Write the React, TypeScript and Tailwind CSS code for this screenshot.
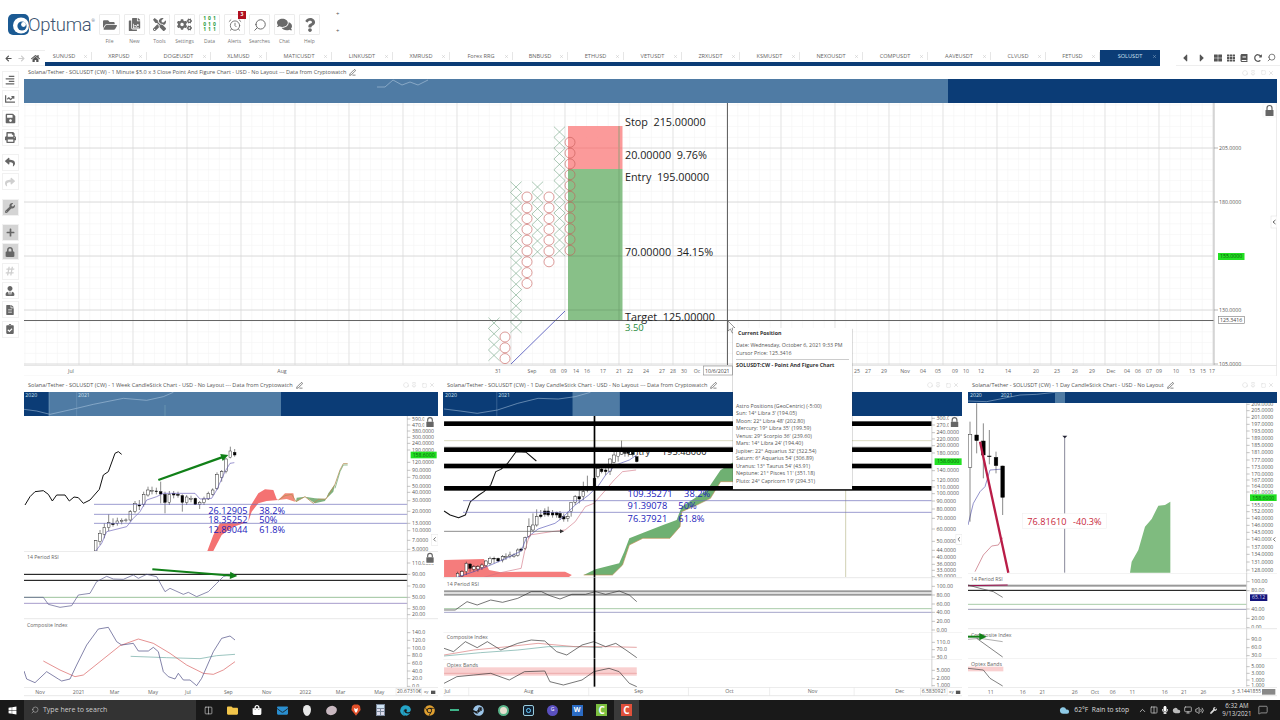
import type { ReactNode } from 'react';
import {
  FaArrowLeft,
  FaArrowRight,
  FaCaretLeft,
  FaCaretRight,
  FaChrome,
  FaClipboardCheck,
  FaCogs,
  FaComments,
  FaEdge,
  FaEnvelope,
  FaFileAlt,
  FaFolder,
  FaFolderOpen,
  FaHashtag,
  FaHome,
  FaLock,
  FaMicrophone,
  FaPlus,
  FaPrint,
  FaQuestion,
  FaRedoAlt,
  FaReply,
  FaSave,
  FaShare,
  FaShoppingBag,
  FaSteam,
  FaThLarge,
  FaTh,
  FaTools,
  FaUserTie,
  FaWindows,
  FaWrench,
  FaBook,
  FaAlignRight,
  FaChartLine,
  FaCopy,
} from 'react-icons/fa';
import {
  AlarmClock,
  ChevronUp,
  Cloud,
  Columns2,
  Hexagon,
  MessageSquare,
  Monitor,
  PenLine,
  Pin,
  Search,
  Square,
  Volume2,
  X,
} from 'lucide-react';

const NAVY = '#0b3c76';
const LIGHT = '#4f7ba4';

// ---- chart helpers. Panes draw in page units of a 3x crop so the numbers stay readable.
type PaneProps = {
  x: number;
  y: number;
  w: number;
  h: number;
  ox?: number;
  oy?: number;
  sx?: number;
  sy?: number;
  children: ReactNode;
};

function Pane({ x, y, w, h, ox = 0, oy = 0, sx = 3, sy = 3, children }: PaneProps) {
  return (
    <svg
      width={w}
      height={h}
      viewBox={`${(x - ox) * sx} ${(y - oy) * sy} ${w * sx} ${h * sy}`}
      preserveAspectRatio="none"
      className="block shrink-0"
    >
      {children}
    </svg>
  );
}

type Candle = [number, number, number, number, number, number?];

function Candles({ data, bw = 8 }: { data: Candle[]; bw?: number }) {
  return (
    <g>
      {data.map(([x, hi, lo, o, c, black], i) => (
        <g key={i}>
          <line x1={x} x2={x} y1={hi} y2={lo} stroke="#222" strokeWidth={1.6} />
          <rect
            x={x - bw / 2}
            y={o}
            width={bw}
            height={Math.max(c - o, 2)}
            fill={black ? '#000' : '#fff'}
            stroke="#111"
            strokeWidth={1.3}
          />
        </g>
      ))}
    </g>
  );
}

function Line({ d, c = '#555', w = 2 }: { d: string; c?: string; w?: number }) {
  return <polyline points={d} fill="none" stroke={c} strokeWidth={w} strokeLinejoin="round" />;
}

function Label({ x, y, text, size = 15.5, color = '#666' }: { x: number; y: number; text: string; size?: number; color?: string }) {
  return (
    <text x={x} y={y + size * 0.35} fontSize={size} fill={color}>
      {text}
    </text>
  );
}

function Axis({ x, top, bottom, ticks }: { x: number; top: number; bottom: number; ticks: [number, string][] }) {
  return (
    <g>
      <line x1={x} x2={x} y1={top} y2={bottom} stroke="#c8c8c8" strokeWidth={2.5} />
      {ticks.map(([y, t]) => (
        <g key={y}>
          <line x1={x} x2={x + 9} y1={y} y2={y} stroke="#888" strokeWidth={1.5} />
          <Label x={x + 14} y={y} text={t} color="#555" />
        </g>
      ))}
    </g>
  );
}

function Badge({ x, y, w, text, bg = '#23e023', color = '#0a5a0a' }: { x: number; y: number; w: number; text: string; bg?: string; color?: string }) {
  return (
    <g>
      <rect x={x} y={y - 10} width={w} height={20} fill={bg} />
      <text x={x + w / 2} y={y + 5.5} fontSize={15.5} fill={color} textAnchor="middle">
        {text}
      </text>
    </g>
  );
}

function Arrow({ x1, y1, x2, y2, w = 6 }: { x1: number; y1: number; x2: number; y2: number; w?: number }) {
  const a = Math.atan2(y2 - y1, x2 - x1);
  const hx = (t: number, s: number) => x2 - t * Math.cos(a) - s * Math.sin(a);
  const hy = (t: number, s: number) => y2 - t * Math.sin(a) + s * Math.cos(a);
  return (
    <g>
      <line x1={x1} y1={y1} x2={hx(12, 0)} y2={hy(12, 0)} stroke="#118018" strokeWidth={w} />
      <polygon
        points={`${x2},${y2} ${hx(22, 11)},${hy(22, 11)} ${hx(22, -11)},${hy(22, -11)}`}
        fill="#118018"
      />
    </g>
  );
}

function LockBadge({ x, y }: { x: number; y: number }) {
  return (
    <g>
      <rect x={x - 17} y={y - 19} width={34} height={36} fill="#fff" />
      <rect x={x - 11} y={y - 3} width={22} height={16} fill="#666" rx={1} />
      <path d={`M${x - 7} ${y - 3} v-5 a7 7 0 0 1 14 0 v5`} fill="none" stroke="#666" strokeWidth={3.5} />
    </g>
  );
}

function XLabels({ items, y = 950 }: { items: [number, string][]; y?: number }) {
  return (
    <g>
      {items.map(([x, t]) => (
        <text key={x} x={x} y={y + 5.5} fontSize={15.5} fill="#666" textAnchor="middle">
          {t}
        </text>
      ))}
    </g>
  );
}

function Divider({ x1, x2, y }: { x1: number; x2: number; y: number }) {
  return <line x1={x1} x2={x2} y1={y} y2={y} stroke="#ddd" strokeWidth={2} />;
}

function Nav({ x, y, w, h, from, to, ox, oy = 375, sx = 3, sy = 3, children }: { x: number; y: number; w: number; h: number; from: number; to: number; ox: number; oy?: number; sx?: number; sy?: number; children?: ReactNode }) {
  return (
    <Pane x={x} y={y} w={w} h={h} ox={ox} oy={oy} sx={sx} sy={sy}>
      <rect x={-100} y={0} width={2000} height={200} fill={NAVY} />
      <rect x={from} y={0} width={to - from} height={200} fill={LIGHT} />
      {children}
    </Pane>
  );
}

// ---- top point & figure chart
const range = (from: number, to: number, step: number) => {
  const out: number[] = [];
  for (let v = from; v <= to; v += step) out.push(v);
  return out;
};

function XColumn({ x, from, to }: { x: number; from: number; to: number }) {
  return (
    <g>
      {range(from, to, 10.8).map(y => (
        <path
          key={y}
          d={`M${x - 5.6} ${y - 5.4} L${x + 5.6} ${y + 5.4} M${x + 5.6} ${y - 5.4} L${x - 5.6} ${y + 5.4}`}
          stroke="#74a585"
          strokeWidth={0.6}
        />
      ))}
    </g>
  );
}

function OColumn({ x, from, to }: { x: number; from: number; to: number }) {
  return (
    <g>
      {range(from, to, 10.8).map(y => (
        <circle key={y} cx={x} cy={y} r={5} fill="none" stroke="#c65a58" strokeWidth={0.6} />
      ))}
    </g>
  );
}

const topDates: [number, string][] = [
  [71, 'Jul'], [282, 'Aug'], [498, '31'], [532, 'Sep'], [553, '08'], [564, '09'], [576, '14'], [587, '16'],
  [603, '17'], [619, '21'], [630, '22'], [646, '24'], [662, '27'], [673, '28'], [684, '30'], [697, 'Oc'],
  [857, '25'], [868, '27'], [884, '29'], [905, 'Nov'], [923, '04'], [938, '05'], [955, '09'], [966, '10'],
  [981, '12'], [1008, '14'], [1036, '20'], [1057, '23'], [1075, '26'], [1092, '29'], [1111, 'Dec'],
  [1127, '04'], [1138, '06'], [1149, '07'], [1159, '09'], [1176, '10'], [1192, '13'], [1203, '15'], [1212, '17'],
];

function TopChart() {
  return (
    <Pane x={24} y={103} w={1253} h={273} sx={1} sy={1}>
      {range(25, 1214, 10.8).map(x => (
        <line key={x} x1={x} x2={x} y1={103} y2={365} stroke="#f3f3f3" strokeWidth={0.6} />
      ))}
      {range(105, 365, 10.8).map(y => (
        <line key={y} x1={24} x2={1214} y1={y} y2={y} stroke="#f3f3f3" strokeWidth={0.6} />
      ))}
      {range(79, 1214, 54).map(x => (
        <line key={x} x1={x} x2={x} y1={103} y2={365} stroke="#dcdcdc" strokeWidth={0.7} />
      ))}
      {[148, 202, 256, 310, 364].map(y => (
        <line key={y} x1={24} x2={1214} y1={y} y2={y} stroke="#d4d4d4" strokeWidth={0.8} />
      ))}

      <rect x={568} y={126} width={54.5} height={43} fill="#fb8f8f" fillOpacity={0.9} />
      <rect x={568} y={169} width={54.5} height={151} fill="#82bd82" fillOpacity={0.95} />
      <line x1={619} x2={619} y1={126} y2={320} stroke="#6fa06f" strokeWidth={0.7} />
      <line x1={568} x2={622} y1={148} y2={148} stroke="#e88" strokeWidth={0.6} />
      {[202, 256, 310].map(y => (
        <line key={y} x1={568} x2={622} y1={y} y2={y} stroke="#6fa06f" strokeWidth={0.6} />
      ))}

      <line x1={511} y1={364} x2={565} y2={311} stroke="#5a5fc0" strokeWidth={0.9} />
      <XColumn x={559.5} from={132} to={254} />
      <OColumn x={570} from={142.3} to={251} />
      <XColumn x={537.5} from={187} to={255} />
      <OColumn x={549} from={197} to={262} />
      <XColumn x={516} from={187} to={335} />
      <OColumn x={527} from={197} to={294} />
      <XColumn x={494} from={323} to={363} />
      <OColumn x={505} from={337} to={359} />

      <line x1={24} x2={1214} y1={320.5} y2={320.5} stroke="#555" strokeWidth={0.9} />
      <line x1={727.5} x2={727.5} y1={103} y2={365} stroke="#555" strokeWidth={0.9} />

      <g fontSize={10.8} fill="#222">
        <text x={625} y={126}>Stop&#160;&#160;215.00000</text>
        <text x={625} y={159}>20.00000&#160;&#160;9.76%</text>
        <text x={625} y={181}>Entry&#160;&#160;195.00000</text>
        <text x={625} y={256}>70.00000&#160;&#160;34.15%</text>
        <text x={625} y={321}>Target&#160;&#160;125.00000</text>
      </g>
      <text x={625} y={331} fontSize={9.5} fill="#1f8a3c">3.50</text>

      <path d="M728 321 l0 10 l2.4 -2 l2 4 l1.6 -.8 l-2 -4 l3 -.2 z" fill="#fff" stroke="#555" strokeWidth={0.6} />

      <line x1={1214} x2={1214} y1={103} y2={365} stroke="#c4c4c4" strokeWidth={1.2} />
      <line x1={24} x2={1277} y1={365.5} y2={365.5} stroke="#ddd" strokeWidth={0.7} />
      <line x1={1276.5} x2={1276.5} y1={103} y2={376} stroke="#e4e4e4" strokeWidth={0.7} />
      <line x1={24} x2={1277} y1={376} y2={376} stroke="#eee" strokeWidth={0.7} />
      {([[148, '205.0000'], [202, '180.0000'], [310, '130.0000'], [364, '105.0000']] as [number, string][]).map(([y, t]) => (
        <g key={y}>
          <line x1={1214} x2={1218} y1={y} y2={y} stroke="#888" strokeWidth={0.6} />
          <text x={1219} y={y + 1.8} fontSize={5.2} fill="#555">{t}</text>
        </g>
      ))}
      <rect x={1218} y={253} width={26.5} height={7} fill="#23e023" />
      <text x={1220} y={258.4} fontSize={5.2} fill="#0a5a0a">155.0000</text>
      <rect x={1218.5} y={316.5} width={26} height={7} fill="#fff" stroke="#777" strokeWidth={0.6} />
      <text x={1220} y={322} fontSize={5.2} fill="#444">125.3416</text>

      <g fontSize={5.2} fill="#666" textAnchor="middle">
        {topDates.map(([x, t]) => (
          <text key={x} x={x} y={372.5}>{t}</text>
        ))}
      </g>
      <rect x={703.5} y={366} width={29} height={9} fill="#fff" stroke="#777" strokeWidth={0.5} />
      <text x={705} y={372.5} fontSize={5.2} fill="#444">10/6/2021</text>

      <rect x={1263} y={104} width={13} height={13} fill="#fff" stroke="#eee" strokeWidth={0.5} />
      <rect x={1265.5} y={110} width={8} height={6} rx={0.5} fill="#666" />
      <path d="M1267 110 v-2 a2.5 2.5 0 0 1 5 0 v2" fill="none" stroke="#666" strokeWidth={1.2} />
      <rect x={1271} y={216} width={6} height={12} fill="#fff" stroke="#ddd" strokeWidth={0.5} />
      <path d="M1275.5 220 l-2.5 2 l2.5 2" fill="none" stroke="#555" strokeWidth={0.9} />
    </Pane>
  );
}

// ---- bottom-left weekly chart
const weekCandles: Candle[] = [
  [287, 495, 528, 497, 528], [300, 465, 510, 475, 500], [313, 445, 490, 457, 478], [326, 418, 468, 443, 458],
  [339, 430, 455, 445, 449, 1], [352, 428, 452, 438, 445], [365, 430, 448, 436, 440], [378, 430, 442, 435, 437],
  [391, 405, 440, 410, 435], [405, 378, 415, 385, 410], [418, 375, 405, 390, 393, 1], [431, 350, 395, 358, 388],
  [444, 335, 365, 345, 360], [456, 335, 358, 347, 350], [469, 338, 358, 348, 350, 1], [482, 320, 385, 350, 357, 1],
  [495, 350, 415, 358, 382, 1], [508, 348, 390, 358, 382], [521, 348, 370, 356, 360, 1], [534, 350, 368, 358, 361, 1],
  [547, 358, 410, 362, 382, 1], [560, 360, 390, 366, 383], [573, 362, 382, 370, 373], [586, 368, 390, 370, 388, 1],
  [599, 378, 402, 382, 388], [612, 365, 390, 372, 383], [625, 350, 375, 355, 372], [638, 340, 362, 345, 358],
  [651, 292, 345, 298, 340], [665, 285, 320, 290, 308], [678, 250, 295, 252, 290], [691, 215, 250, 228, 248],
  [704, 222, 245, 232, 240, 1],
];

function LeftPanel() {
  const o = { ox: 0, oy: 375 };
  const x = 24;
  const w = 414;
  return (
    <section className="flex w-[414px] flex-col">
      <TitleBar text="Solana/Tether - SOLUSDT (CW) - 1 Week CandleStick Chart - USD - No Layout --- Data from Cryptowatch" />
      <Nav x={x} y={392} w={w} h={24} from={49 * 3} to={281 * 3} ox={0}>
        <Label x={76} y={60} text="2020" color="#cfe0f0" />
        <Label x={234} y={60} text="2021" color="#cfe0f0" />
        <Line d="72,103 110,108 150,118 230,100 280,88 370,70 440,76 490,65 520,52" c="#b9d0e6" w={1.5} />
        <line x1={147} x2={147} y1={50} y2={123} stroke="#8fb0cc" strokeWidth={1.5} />
        <line x1={230} x2={230} y1={50} y2={123} stroke="#8fb0cc" strokeWidth={1} />
        <line x1={495} x2={495} y1={90} y2={123} stroke="#9cc" strokeWidth={1} />
      </Nav>
      <Pane x={x} y={416} w={w} h={135} {...o}>
        <Line d="75,390 90,365 105,350 130,347 145,358 157,378 170,360 195,360 208,378 222,366 235,368 250,385 270,375 298,343 310,300 325,290 345,235 355,230 365,238" c="#111" w={3} />
        <polygon points="622,528 640,480 660,445 745,440 750,395 775,355 795,343 820,345 830,372 835,375 800,378 775,385 755,410 745,440 700,455 665,480 640,528" fill="#f47272" />
        <polygon points="835,375 855,355 880,355 885,380 860,372" fill="#f38a7a" />
        <polygon points="888,380 915,365 945,385 975,378 985,355 1005,328 1000,350 985,365 975,372 945,370 915,365 890,368" fill="#7fb27f" />
        <Line d="835,375 855,362 875,358 888,380 915,365 940,385 955,373 978,372 1005,328 1020,285 1030,266 1043,266" c="#b88f58" w={2.5} />
        <Line d="1005,340 1020,290 1030,270 1043,270" c="#7fb27f" w={2.5} />
        <Candles data={weekCandles} />
        <Line d="287,528 305,505 320,470 380,455 400,430 420,410 440,375 470,365 490,355 585,355 600,372 635,370 650,345 675,290 690,265 703,263" c="#5a50b0" w={1.8} />
        {[388, 418, 445].map(y => (
          <line key={y} x1={282} x2={1222} y1={y} y2={y} stroke="#6a6ab8" strokeWidth={2} />
        ))}
        <g fontSize={27.5} fill="#2222bb">
          <text x={625} y={416}>26.12905</text>
          <text x={778} y={416}>38.2%</text>
          <text x={625} y={445}>18.35252</text>
          <text x={778} y={445}>50%</text>
          <text x={625} y={473}>12.89044</text>
          <text x={778} y={473}>61.8%</text>
        </g>
        <Arrow x1={475} y1={315} x2={685} y2={240} w={7} />
        <Axis
          x={1222}
          top={123}
          bottom={528}
          ticks={[[132, '590.0000'], [150, '470.0000'], [168, '380.0000'], [187, '300.0000'], [205, '240.0000'], [225, '190.0000'], [262, '120.0000'], [286, '90.0000'], [307, '70.0000'], [334, '50.0000'], [352, '40.0000'], [377, '30.0000'], [409, '20.0000'], [445, '13.0000'], [467, '10.0000'], [496, '7.0000'], [523, '5.0000']]}
        />
        <LockBadge x={1290} y={143} />
        <Badge x={1232} y={240} w={78} text="158.6000" />
        <rect x={1294} y={478} width={20} height={34} fill="#fff" stroke="#e4e4e4" strokeWidth={1.5} />
        <path d="M1307 487 l-6 6 l6 6" fill="none" stroke="#555" strokeWidth={2.5} />
      </Pane>
      <Pane x={x} y={551} w={w} h={67} {...o}>
        <Divider x1={72} x2={1314} y={529} />
        <Label x={81} y={548} text="14 Period RSI" />
        <line x1={72} x2={1222} y1={598} y2={598} stroke="#000" strokeWidth={3} />
        <line x1={72} x2={1222} y1={616} y2={616} stroke="#000" strokeWidth={3} />
        <line x1={72} x2={1222} y1={667} y2={667} stroke="#6aa56a" strokeWidth={2} />
        <line x1={72} x2={1222} y1={685} y2={685} stroke="#7a6ab0" strokeWidth={2} />
        <Line d="72,667 130,667 145,688 180,697 215,692 235,660 270,655 290,620 320,604 340,612 370,613 400,600 415,610 440,598 470,605 495,650 510,640 550,658 565,652 590,665 625,650 650,625 670,605 700,595" c="#55558a" />
        <Arrow x1={457} y1={583} x2={712} y2={603} />
        <Axis x={1222} top={528} bottom={730} ticks={[[564, '110.0000'], [598, '90.00'], [633, '70.00'], [667, '50.00'], [701, '30.00'], [719, '20.00']]} />
        <LockBadge x={1290} y={550} />
      </Pane>
      <Pane x={x} y={618} w={w} h={69} {...o}>
        <Divider x1={72} x2={1314} y={731} />
        <Label x={81} y={750} text="Composite Index" />
        <Line d="392,844 500,848 600,851 650,842 705,838" c="#6aa8a0" />
        <Line d="130,858 180,885 225,905 250,900 300,860 360,812 415,792 460,805 510,835 560,870 610,895 640,898 670,885 705,860" c="#d85a5a" />
        <Line d="72,888 80,912 105,923 140,890 175,912 185,918 210,912 230,870 260,810 295,762 325,757 350,800 365,810 400,805 415,828 445,828 460,817 475,830 490,890 505,905 525,912 535,895 550,915 570,915 590,932 605,910 640,830 665,790 690,783 705,795" c="#45457e" />
        <Axis x={1222} top={730} bottom={936} ticks={[[773, '140.0'], [796, '120.0'], [819, '100.0'], [842, '80.0'], [865, '60.0'], [888, '40.0'], [911, '20.0'], [934, '0.0']]} />
      </Pane>
      <Pane x={x} y={687} w={w} h={10} {...o}>
        <Divider x1={72} x2={1314} y={937} />
        <XLabels items={[[120, 'Nov'], [236, '2021'], [344, 'Mar'], [459, 'May'], [564, 'Jul'], [685, 'Sep'], [800, 'Nov'], [916, '2022'], [1022, 'Mar'], [1138, 'May']]} />
        <rect x={1188} y={940} width={76} height={20} fill="#fff" stroke="#ddd" strokeWidth={1.5} />
        <text x={1191} y={955} fontSize={15} fill="#555">20.67310€</text>
        <text x={1272} y={955} fontSize={13} fill="#555">xy</text>
        <rect x={1293} y={947} width={13} height={10} fill="#555" />
        <Divider x1={72} x2={1314} y={962} />
      </Pane>
    </section>
  );
}

// ---- bottom-middle daily chart
const dayCandles: Candle[] = [
  [52, 590, 607, 595, 607], [65, 585, 607, 590, 603], [78, 560, 600, 565, 590], [89, 565, 590, 567, 580, 1],
  [100, 570, 590, 575, 583], [112, 570, 590, 575, 582], [124, 565, 585, 570, 578], [136, 555, 575, 558, 572],
  [148, 545, 570, 550, 565], [160, 545, 565, 550, 552, 1], [172, 548, 562, 550, 558, 1], [185, 540, 562, 545, 555],
  [195, 535, 555, 545, 548], [207, 530, 550, 540, 545], [219, 535, 548, 540, 545], [230, 520, 545, 525, 542],
  [240, 518, 530, 522, 526, 1], [252, 485, 525, 488, 520], [263, 430, 490, 455, 485], [275, 415, 470, 450, 465],
  [286, 403, 455, 425, 450], [298, 405, 430, 420, 425, 1], [310, 400, 425, 408, 418, 1], [320, 395, 425, 408, 420, 1],
  [333, 405, 428, 413, 420, 1], [345, 410, 428, 413, 420, 1], [355, 408, 435, 415, 428, 1], [366, 415, 440, 425, 432, 1],
  [378, 410, 440, 425, 430], [388, 385, 425, 382, 410], [400, 360, 390, 365, 382], [412, 345, 385, 365, 372, 1],
  [424, 320, 375, 350, 365], [436, 302, 352, 335, 345], [457, 305, 345, 310, 335, 1], [467, 270, 310, 280, 305],
  [478, 275, 295, 282, 290, 1], [490, 280, 300, 285, 290, 1], [503, 250, 300, 252, 290], [515, 230, 265, 240, 262],
  [527, 220, 260, 230, 245], [537, 197, 240, 230, 238], [547, 225, 245, 232, 235, 1], [557, 228, 245, 230, 235, 1],
  [570, 225, 245, 232, 238, 1], [582, 245, 262, 245, 260, 1],
];

function MidPanel() {
  const o = { ox: 440, oy: 375, sx: 2.958 };
  const x = 443;
  const w = 519;
  const cursor = (a: number, b: number) => <line x1={457} x2={457} y1={a} y2={b} stroke="#000" strokeWidth={5} />;
  return (
    <section className="flex w-[519px] flex-col">
      <TitleBar text="Solana/Tether - SOLUSDT (CW) - 1 Day CandleStick Chart - USD - No Layout --- Data from Cryptowatch" />
      <Nav x={x} y={392} w={w} h={24} from={392} to={532} ox={440} sx={2.958}>
        <Label x={15} y={60} text="2020" color="#cfe0f0" />
        <Label x={172} y={60} text="2021" color="#cfe0f0" />
        <Line d="12,102 60,108 110,115 170,105 230,85 290,70 350,72 400,65 445,52" c="#b9d0e6" w={1.5} />
        <line x1={168} x2={168} y1={50} y2={123} stroke="#8fb0cc" strokeWidth={1} />
      </Nav>
      <Pane x={x} y={416} w={w} h={161} {...o}>
        <line x1={12} x2={1455} y1={197} y2={197} stroke="#c9c9a5" strokeWidth={2} />
        <line x1={12} x2={1455} y1={215} y2={215} stroke="#ccc" strokeWidth={2} />
        <line x1={1200} x2={1200} y1={340} y2={607} stroke="#b7b78c" strokeWidth={2} />
        <polygon points="12,555 130,552 145,585 180,592 240,590 370,590 390,600 380,607 12,607" fill="#f57c7c" />
        <polygon points="425,600 460,583 530,565 545,530 560,490 605,472 660,450 700,435 715,395 790,345 830,285 870,260 870,320 830,320 800,370 760,390 715,410 710,455 680,490 600,490 560,510 540,570 510,600 430,600" fill="#6fb072" />
        <Line d="425,600 510,600 540,570 560,510 600,490 680,490 710,455 715,410 760,390 800,370 830,320 870,320" c="#c48b4f" w={1.8} />
        <Line d="12,408 30,420 55,428 75,420 90,380 115,360 130,350 150,330 165,290 180,283 200,265 225,230 255,232 285,258" c="#111" w={3} />
        <Candles data={dayCandles} />
        <Line d="50,607 100,590 150,570 200,548 240,528 255,490 290,462 340,445 360,430 400,390 440,360 470,330 490,300 520,270 560,255 582,240" c="#4a4ab0" w={1.8} />
        <Line d="130,607 170,595 240,580 250,530 265,480 330,470 370,465 400,440 430,395 455,385 490,345 515,315 540,290 580,285" c="#d07080" w={1.8} />
        <line x1={12} x2={360} y1={469} y2={469} stroke="#555" strokeWidth={2} />
        <polygon points="355,463 367,469 355,475" fill="#333" />
        <text x={555} y={240} fontSize={27.5} fill="#222">Entry</text>
        <text x={656} y={240} fontSize={27.5} fill="#222">195.48000</text>
        {[146, 224, 273, 340].map(y => (
          <rect key={y} x={12} y={y - 7} width={1443} height={14} fill="#000" />
        ))}
        {[377, 412].map(y => (
          <line key={y} x1={68} x2={1455} y1={y} y2={y} stroke="#6a6ab8" strokeWidth={2} />
        ))}
        <g fontSize={27.5} fill="#2222bb">
          <text x={555} y={365}>109.35271</text>
          <text x={722} y={365}>38.2%</text>
          <text x={555} y={403}>91.39078</text>
          <text x={705} y={403}>50%</text>
          <text x={555} y={440}>76.37921</text>
          <text x={705} y={440}>61.8%</text>
        </g>
        {cursor(123, 607)}
        <Axis
          x={1455}
          top={123}
          bottom={607}
          ticks={[[130, '300.0000'], [150, '270.0000'], [173, '240.0000'], [192, '220.0000'], [212, '200.0000'], [234, '180.0000'], [287, '140.0000'], [317, '120.0000'], [336, '110.0000'], [356, '100.0000'], [378, '90.0000'], [402, '80.0000'], [430, '70.0000'], [462, '60.0000'], [499, '50.0000'], [526, '44.0000'], [546, '40.0000'], [568, '36.0000'], [586, '33.0000'], [605, '30.0000']]}
        />
        <LockBadge x={1522} y={143} />
        <Badge x={1463} y={260} w={80} text="158.6000" />
        <rect x={1526} y={478} width={18} height={30} fill="#fff" stroke="#e4e4e4" strokeWidth={1.5} />
        <path d="M1538 487 l-6 6 l6 6" fill="none" stroke="#555" strokeWidth={2.5} />
      </Pane>
      <Pane x={x} y={577} w={w} h={55} {...o}>
        <Divider x1={10} x2={1545} y={608} />
        <Label x={20} y={627} text="14 Period RSI" />
        <rect x={12} y={646} width={1443} height={6} fill="#999" />
        <rect x={12} y={656} width={1443} height={6} fill="#999" />
        <line x1={12} x2={1455} y1={701} y2={701} stroke="#7fb27f" strokeWidth={2} />
        <line x1={12} x2={1455} y1={712} y2={712} stroke="#7a7ab0" strokeWidth={2} />
        <Line d="12,705 45,705 80,680 110,690 150,675 185,682 230,670 270,650 300,650 325,662 355,672 390,658 430,658 460,650 490,658 530,648 560,660 582,680" c="#333" />
        {cursor(607, 770)}
        <Axis x={1455} top={607} bottom={770} ticks={[[634, '100.00'], [660, '80.00'], [687, '60.00'], [712, '40.00'], [739, '20.00'], [765, '0.00']]} />
      </Pane>
      <Pane x={x} y={632} w={w} h={27} {...o}>
        <Divider x1={10} x2={1545} y={771} />
        <Label x={20} y={788} text="Composite Index" />
        <Line d="12,843 120,833 230,825 320,815 420,815 480,818" c="#6aa8a0" />
        <Line d="12,840 100,825 200,815 290,805 400,815 500,815 582,817" c="#d87a7a" />
        <Line d="12,820 40,830 75,800 110,818 140,800 180,825 230,805 270,795 310,798 345,830 375,840 420,810 455,800 490,815 520,805 550,825 582,848" c="#333" />
        {cursor(770, 851)}
        <Axis x={1455} top={770} bottom={851} ticks={[[802, '110.0'], [824, '70.0'], [846, '30.0']]} />
      </Pane>
      <Pane x={x} y={659} w={w} h={28} {...o}>
        <Divider x1={10} x2={1545} y={852} />
        <rect x={12} y={877} width={570} height={25} fill="#f9d0d0" />
        <line x1={12} x2={582} y1={895} y2={895} stroke="#e79a9a" strokeWidth={2} />
        <Label x={20} y={872} text="Optex Bands" />
        <Line d="12,925 50,905 100,900 150,895 205,915 250,890 310,888 325,920 365,930 420,915 455,890 500,880 530,890 560,925 582,935" c="#333" />
        {cursor(851, 935)}
        <Axis x={1455} top={851} bottom={935} ticks={[[886, '5.000'], [911, '2.000'], [932, '1.000']]} />
      </Pane>
      <Pane x={x} y={687} w={w} h={10} {...o}>
        <Divider x1={10} x2={1545} y={937} />
        <XLabels items={[[22, 'Jul'], [262, 'Aug'], [588, 'Sep'], [856, 'Oct'], [1102, 'Nov'], [1360, 'Dec']]} />
        {[85, 440, 735, 975, 1225].map(v => (
          <line key={v} x1={v} x2={v} y1={937} y2={962} stroke="#e5e5e5" strokeWidth={2} />
        ))}
        <rect x={1422} y={940} width={78} height={20} fill="#fff" stroke="#ddd" strokeWidth={1.5} />
        <text x={1425} y={955} fontSize={15} fill="#555">6.5830921</text>
        <text x={1506} y={955} fontSize={13} fill="#555">xy</text>
        <rect x={1526} y={947} width={13} height={10} fill="#555" />
        <Divider x1={10} x2={1545} y={962} />
      </Pane>
    </section>
  );
}

// ---- bottom-right daily chart
function RightPanel() {
  const o = { ox: 960, oy: 375 };
  const x = 968;
  const w = 309;
  return (
    <section className="ml-[1px] flex w-[309px] flex-col">
      <TitleBar text="Solana/Tether - SOLUSDT (CW) - 1 Day CandleStick Chart - USD - No Layout" />
      <Nav x={x} y={392} w={w} h={11} from={285} to={315} ox={960}>
        <Label x={30} y={60} text="2020" color="#cfe0f0" />
        <Label x={122} y={60} text="2021" color="#cfe0f0" />
        <Line d="24,78 80,80 120,72 180,60 230,58 285,52" c="#b9d0e6" w={1.5} />
      </Nav>
      <Pane x={x} y={403} w={w} h={170} {...o}>
        <polygon points="510,593 515,560 535,525 555,455 575,432 595,392 615,390 631,380 631,593" fill="#7fbb7f" />
        <line x1={314} x2={314} y1={185} y2={593} stroke="#707085" strokeWidth={2.5} />
        <path d="M307 182 h15 l-7.5 8 z" fill="#223" />
        <Line d="24,450 40,385 60,350 75,335 90,285 130,282" c="#5a5ab0" />
        <Line d="45,590 70,540 95,513 115,510 128,488" c="#c06070" />
        <Candles
          bw={11}
          data={[
            [30, 140, 440, 178, 277],
            [50, 85, 235, 180, 197, 1],
            [70, 145, 310, 198, 240, 1],
            [88, 165, 268, 243, 245, 1],
            [108, 230, 295, 247, 272, 1],
            [128, 272, 420, 273, 367, 1],
          ]}
        />
        <line x1={60} y1={200} x2={145} y2={593} stroke="#b91c47" strokeWidth={7} />
        <rect x={188} y={416} width={252} height={45} fill="#fff" stroke="#eee" strokeWidth={1.5} />
        <text x={202} y={449} fontSize={27.5} fill="#c8283c">76.81610</text>
        <text x={339} y={449} fontSize={27.5} fill="#c8283c">-40.3%</text>
        <Axis
          x={860}
          top={85}
          bottom={593}
          ticks={[[88, '209.0000'], [107, '205.0000'], [127, '201.0000'], [148, '197.0000'], [168, '193.0000'], [190, '189.0000'], [211, '185.0000'], [233, '181.0000'], [255, '177.0000'], [278, '173.0000'], [297, '170.0000'], [315, '167.0000'], [333, '164.0000'], [351, '161.0000'], [391, '155.0000'], [410, '152.0000'], [430, '149.0000'], [451, '146.0000'], [472, '143.0000'], [493, '140.0000'], [516, '137.0000'], [538, '134.0000'], [561, '131.0000'], [585, '128.0000']]}
        />
        <Badge x={870} y={368} w={80} text="158.6000" />
        <rect x={935} y={478} width={16} height={30} fill="#fff" />
        <path d="M946 487 l-6 6 l6 6" fill="none" stroke="#555" strokeWidth={2.5} />
      </Pane>
      <Pane x={x} y={573} w={w} h={55} {...o}>
        <Divider x1={24} x2={951} y={594} />
        <Label x={33} y={612} text="14 Period RSI" />
        <rect x={24} y={629} width={836} height={6} fill="#999" />
        <Line d="24,632 143,630" c="#a01050" w={3} />
        <line x1={24} x2={860} y1={646} y2={646} stroke="#000" strokeWidth={3} />
        <line x1={24} x2={860} y1={688} y2={688} stroke="#7fb27f" strokeWidth={2} />
        <line x1={24} x2={860} y1={703} y2={703} stroke="#6a6a90" strokeWidth={2} />
        <Line d="24,630 60,640 100,650 128,667" c="#444" />
        <Axis x={860} top={593} bottom={760} ticks={[[620, '100.00'], [647, '80.00'], [702, '40.00'], [730, '20.00'], [758, '0.00']]} />
        <rect x={870} y={658} width={52} height={20} fill="#14147c" />
        <text x={896} y={673} fontSize={15.5} fill="#dde" textAnchor="middle">65.12</text>
      </Pane>
      <Pane x={x} y={628} w={w} h={30} {...o}>
        <Divider x1={24} x2={951} y={761} />
        <Label x={33} y={781} text="Composite Index" />
        <Line d="24,793 60,790 128,800" c="#888" />
        <Line d="50,790 128,846" c="#444" />
        <Arrow x1={24} y1={785} x2={80} y2={785} />
        <Axis x={860} top={760} bottom={848} ticks={[[793, '90.0'], [818, '60.0'], [842, '30.0']]} />
      </Pane>
      <Pane x={x} y={658} w={w} h={29} {...o}>
        <Divider x1={24} x2={951} y={849} />
        <rect x={24} y={875} width={106} height={14} fill="#f9d0d0" />
        <Label x={33} y={869} text="Optex Bands" />
        <Line d="24,880 70,885 90,910 128,933" c="#444" />
        <Axis x={860} top={848} bottom={935} ticks={[[875, '5.000'], [895, '3.000'], [915, '1.000'], [932, '1.000']]} />
      </Pane>
      <Pane x={x} y={687} w={w} h={10} {...o}>
        <Divider x1={24} x2={951} y={937} />
        <XLabels items={[[92, '11'], [188, '16'], [247, '21'], [344, '26'], [405, 'Oct'], [458, '06'], [517, '11'], [614, '16'], [672, '21'], [730, '26'], [820, '3']]} />
        <text x={831} y={955} fontSize={15} fill="#555">3.1441855</text>
        <rect x={906} y={942} width={40} height={17} fill="#888" />
        <Divider x1={24} x2={951} y={962} />
      </Pane>
    </section>
  );
}

// ---- chrome
function TitleBar({ text, tall }: { text: string; tall?: boolean }) {
  return (
    <div className={`flex items-center justify-between pl-[4px] pr-[3px] text-[5.55px] text-[#555] ${tall ? 'h-[13px]' : 'h-[14px]'}`}>
      <div className="flex items-center gap-[3px] whitespace-nowrap">
        <span>{text}</span>
        <PenLine size={7} strokeWidth={2} className="text-[#333]" />
      </div>
      <div className="flex items-center gap-[2px] text-[#c9c9c9]">
        <Hexagon size={6} strokeWidth={1.5} />
        <Pin size={6} strokeWidth={1.5} className="mr-[3px]" />
        <Square size={5} strokeWidth={1.5} />
        <X size={6} strokeWidth={2} />
      </div>
    </div>
  );
}

const tools = [
  { label: 'File', icon: <FaFolderOpen size={14} /> },
  { label: 'New', icon: <span className="relative"><FaCopy size={13} /><FaChartLine size={6} className="absolute left-[5px] top-[5px] text-white" /></span> },
  { label: 'Tools', icon: <FaTools size={13} /> },
  { label: 'Settings', icon: <FaCogs size={15} /> },
  {
    label: 'Data',
    icon: (
      <span className="grid grid-cols-3 gap-x-[2px] text-[5px] font-bold leading-[5.5px] text-[#2a9a3a]">
        {'101010111'.split('').map((c, i) => (
          <span key={i}>{c}</span>
        ))}
      </span>
    ),
  },
  { label: 'Alerts', icon: <AlarmClock size={14} strokeWidth={1.5} /> },
  { label: 'Searches', icon: <Search size={14} strokeWidth={1.7} className="-scale-x-100" /> },
  { label: 'Chat', icon: <FaComments size={15} /> },
  { label: 'Help', icon: <FaQuestion size={14} /> },
];

function Header() {
  return (
    <header className="flex h-[50px] shrink-0 items-start pl-[8px] pt-[14px]">
      <div className="flex w-[91px] items-center">
        <svg width={21} height={22} viewBox="0 0 21 22">
          <rect x="0" y="0" width="21" height="21" rx="5" fill="#1b5a93" />
          <circle cx="13" cy="11.5" r="8" fill="#fff" />
          <circle cx="14" cy="12" r="4.6" fill="#1b5a93" />
          <circle cx="15.5" cy="10.5" r="2.4" fill="#fff" />
        </svg>
        <span className="-ml-[1px] text-[18.5px] font-light leading-none tracking-[-0.3px] text-[#3c5470] [font-family:Roboto,sans-serif]">Optuma</span>
        <span className="mb-[8px] text-[4px] text-[#3c5470]">®</span>
      </div>
      <div className="flex gap-[4px]">
        {tools.map(t => (
          <div key={t.label} className="relative flex w-[21px] flex-col items-center">
            <div className="flex h-[21px] w-[21px] items-center justify-center rounded-[1px] border border-[#ececec] text-[#6a6a6a]">
              {t.icon}
            </div>
            {t.label === 'Alerts' && (
              <span className="absolute -right-[1px] -top-[3px] flex h-[8px] w-[8px] items-center justify-center bg-[#b01020] text-[5px] font-bold text-white">3</span>
            )}
            <span className="mt-[3px] whitespace-nowrap text-[5px] text-[#777]">{t.label}</span>
          </div>
        ))}
      </div>
      <div className="-mt-[2px] ml-[16px] flex flex-col gap-[12px] text-[6px] leading-[5px] text-[#555]">
        <span>+</span>
        <span>+</span>
      </div>
    </header>
  );
}

const tabs = [
  { name: 'SUNUSD', w: 'w-[47px] pl-0' },
  { name: 'XRPUSD', w: 'w-[55px] pl-[8px]' },
  { name: 'DOGEUSDT', w: 'w-[64px] pl-[8px]' },
  { name: 'XLMUSD', w: 'w-[56px] pl-[8px]' },
  { name: 'MATICUSDT', w: 'w-[65px] pl-[8px]' },
  { name: 'LINKUSDT', w: 'w-[61px] pl-[8px]' },
  { name: 'XMRUSD', w: 'w-[57px] pl-[8px]' },
  { name: 'Forex RRG', w: 'w-[63px] pl-[8px]' },
  { name: 'BNBUSD', w: 'w-[55px] pl-[8px]' },
  { name: 'ETHUSD', w: 'w-[56px] pl-[8px]' },
  { name: 'VETUSDT', w: 'w-[58px] pl-[8px]' },
  { name: 'ZRXUSDT', w: 'w-[58px] pl-[8px]' },
  { name: 'KSMUSDT', w: 'w-[60px] pl-[8px]' },
  { name: 'NEXOUSDT', w: 'w-[63px] pl-[8px]' },
  { name: 'COMPUSDT', w: 'w-[65px] pl-[8px]' },
  { name: 'AAVEUSDT', w: 'w-[63px] pl-[8px]' },
  { name: 'CLVUSD', w: 'w-[55px] pl-[8px]' },
  { name: 'FETUSD', w: 'w-[54px] pl-[8px]' },
  { name: 'SOLUSDT', w: 'w-[60px] pl-[8px]', active: true },
];

function TabBar() {
  return (
    <div className="flex h-[16px] shrink-0 items-stretch">
      <div className="flex w-[45px] items-center justify-between border-y border-[#eee] px-[5px]">
        <FaArrowLeft size={7} className="text-[#555]" />
        <FaArrowRight size={7} className="text-[#ccc]" />
        <FaHome size={9} className="text-[#555]" />
      </div>
      {tabs.map(t => (
        <div
          key={t.name}
          className={`flex items-center whitespace-nowrap border-b-[4px] border-[#0b3c76] text-[5.6px] ${t.w} ${
            t.active ? 'bg-[#0b3c76] text-[#cfe0f0]' : 'text-[#666]'
          }`}
        >
          <span className="flex-1 text-center">{t.name}</span>
          <X size={5} strokeWidth={2} className={`mr-[3px] ${t.active ? 'text-[#9fb8d0]' : 'text-[#bbb]'}`} />
          {!t.active && <span className="h-[8px] w-px bg-[#e6e6e6]" />}
        </div>
      ))}
      <div className="ml-auto flex w-[104px] items-center justify-between border-b border-[#eee] px-[4px] text-[#555]">
        <FaCaretLeft size={12} className="-ml-px" />
        <FaCaretRight size={12} />
        <FaThLarge size={8} />
        <FaTh size={8} />
        <FaBook size={8} />
        <FaRedoAlt size={8} />
        <Search size={9} strokeWidth={2} className="-scale-x-100" />
      </div>
    </div>
  );
}

const sideGroups = [
  { mt: 'mt-0', items: [{ icon: <FaAlignRight size={10} /> }, { icon: <FaChartLine size={10} /> }, { icon: <FaSave size={11} /> }, { icon: <FaPrint size={11} /> }] },
  { mt: 'mt-[8px]', items: [{ icon: <FaReply size={10} /> }, { icon: <FaShare size={10} />, off: true }] },
  { mt: 'mt-[9px]', items: [{ icon: <FaWrench size={10} />, on: true }] },
  {
    mt: 'mt-[8px]',
    items: [
      { icon: <FaPlus size={9} />, on: true },
      { icon: <FaLock size={10} />, on: true },
      { icon: <FaHashtag size={10} />, off: true },
      { icon: <FaUserTie size={10} /> },
      { icon: <FaFileAlt size={10} /> },
      { icon: <FaClipboardCheck size={10} /> },
    ],
  },
];

function Sidebar() {
  return (
    <aside className="flex w-[24px] shrink-0 flex-col items-center pr-[4px] pt-[5px]">
      {sideGroups.map((g, i) => (
        <div key={i} className={`flex flex-col gap-[2.3px] ${g.mt}`}>
          {g.items.map((item, j) => {
            const it = item as { icon: ReactNode; on?: boolean; off?: boolean };
            return (
              <div
                key={j}
                className={`flex h-[17px] w-[17px] items-center justify-center border border-[#f1f1f1] ${it.on ? 'bg-[#d4d4d4]' : 'bg-white'} ${it.off ? 'text-[#cfcfcf]' : 'text-[#666]'}`}
              >
                {it.icon}
              </div>
            );
          })}
        </div>
      ))}
    </aside>
  );
}

function Tooltip() {
  const astro = [
    'Astro Positions (GeoCentric) (-5:00)',
    "Sun: 14° Libra 3' (194.05)",
    "Moon: 22° Libra 48' (202.80)",
    "Mercury: 19° Libra 35' (199.59)",
    "Venus: 29° Scorpio 36' (239.60)",
    "Mars: 14° Libra 24' (194.40)",
    "Jupiter: 22° Aquarius 32' (322.54)",
    "Saturn: 6° Aquarius 54' (306.89)",
    "Uranus: 13° Taurus 54' (43.91)",
    "Neptune: 21° Pisces 11' (351.18)",
    "Pluto: 24° Capricorn 19' (294.31)",
  ];
  return (
    <div className="absolute left-[733px] top-[328px] flex h-[161px] w-[119px] flex-col bg-white px-[3px] pt-[2px] text-[5.3px] leading-[7.5px] text-[#555] shadow-[0_1px_1px_#333]">
      <div className="pl-[2px] font-bold text-[#333]">Current Position</div>
      <div className="mt-[4.5px]">Date: Wednesday, October 6, 2021 9:33 PM</div>
      <div>Cursor Price: 125.3416</div>
      <div className="mt-[1.5px] border-t border-[#ccc] pt-[2.5px] font-bold text-[#333]">SOLUSDT:CW - Point And Figure Chart</div>
      <div className="mt-[33px] flex flex-col">
        {astro.map(line => (
          <div key={line}>{line}</div>
        ))}
      </div>
    </div>
  );
}

function Dot({ children }: { children: ReactNode }) {
  return <div className="flex h-[20px] w-[24.6px] items-center justify-center">{children}</div>;
}

function Taskbar() {
  return (
    <footer className="flex h-[20px] shrink-0 items-center bg-[#191919] text-[#ddd]">
      <div className="flex w-[24px] items-center justify-center">
        <FaWindows size={9} className="text-white" />
      </div>
      <div className="flex h-[20px] w-[172px] items-center gap-[4px] bg-[#333] pl-[7px] text-[7px] text-[#ccc]">
        <Search size={8} strokeWidth={1.5} className="-scale-x-100" />
        Type here to search
      </div>
      <div className="flex">
        <Dot><Columns2 size={9} strokeWidth={1.6} className="text-[#ddd]" /></Dot>
        <Dot><FaFolder size={11} className="text-[#f3c64b]" /></Dot>
        <Dot><FaShoppingBag size={10} className="text-white" /></Dot>
        <Dot><FaEnvelope size={11} className="text-[#2a8fd0]" /></Dot>
        <Dot><span className="h-[11px] w-[8px] rounded-[50%_50%_50%_50%/40%_40%_60%_60%] bg-[#e8e8e8]" /></Dot>
        <Dot><span className="h-[9px] w-[11px] rotate-[-20deg] rounded-[50%] bg-[#c9b8c0]" /></Dot>
        <Dot>
          <svg width={10} height={12} viewBox="0 0 10 12">
            <path d="M1 2 L3 .5 H7 L9 2 L9.6 6 L5 11.8 L.4 6 Z" fill="#e2502a" />
            <path d="M3 4 L5 5 L7 4 L6.4 7 L5 9 L3.6 7 Z" fill="#fff" />
          </svg>
        </Dot>
        <Dot>
          <span className="grid h-[12px] w-[9px] grid-cols-2 gap-[1px] bg-[#7c8a9c] p-[1px]">
            <span className="col-span-2 bg-[#cfe3f3]" />
            <span className="bg-[#dde]" />
            <span className="bg-[#dde]" />
            <span className="bg-[#dde]" />
            <span className="bg-[#dde]" />
          </span>
        </Dot>
        <Dot><FaEdge size={11} className="text-[#25a5c8]" /></Dot>
        <Dot><FaChrome size={11} className="text-[#e0a030]" /></Dot>
        <Dot><span className="h-[2px] w-[9px] bg-[#3fb58a]" /></Dot>
        <Dot><FaSteam size={11} className="text-[#9cc5e8]" /></Dot>
        <Dot><span className="h-[11px] w-[11px] rounded-full border-2 border-[#5ab58a] bg-[#e8e0d0]" /></Dot>
        <Dot><span className="h-[11px] w-[11px] rounded-[2px] border border-[#9cd] bg-[#123] p-[2px]"><span className="block h-full w-full rounded-full border border-[#6cf]" /></span></Dot>
        <Dot><span className="flex h-[11px] w-[11px] items-center justify-center rounded-full bg-[#5a50c0] text-[5px] text-white">G</span></Dot>
        <Dot><span className="flex h-[11px] w-[11px] items-center justify-center bg-[#2b6cc4] text-[7px] font-bold text-white">W</span></Dot>
        <Dot><span className="flex h-[12px] w-[11px] items-center justify-center bg-[#7cc040] text-[10px] font-bold leading-none text-white">C</span></Dot>
        <div className="flex h-[20px] w-[24.6px] items-center justify-center bg-[#3a3a3a]">
          <span className="flex h-[12px] w-[11px] items-center justify-center bg-[#e0503a] text-[10px] font-bold leading-none text-white">C</span>
        </div>
      </div>
      <div className="ml-auto flex items-center pr-[12px]">
        <Cloud size={11} fill="#8ecae6" strokeWidth={0} />
        <span className="ml-[4px] whitespace-nowrap text-[6.7px]">62°F&#160;&#160;Rain to stop</span>
        <div className="ml-[9px] flex items-center gap-[3px]">
          <ChevronUp size={9} />
          <Columns2 size={8} />
          <FaMicrophone size={8} className="text-white" />
          <Cloud size={9} fill="#bbb" strokeWidth={0} />
          <Monitor size={8} />
          <Volume2 size={9} />
          <FaWrench size={7} className="ml-[3px]" />
        </div>
        <div className="ml-[6px] flex w-[28px] flex-col items-center text-[6.2px] leading-[8.5px]">
          <span>6:32 AM</span>
          <span>9/13/2021</span>
        </div>
        <MessageSquare size={10} strokeWidth={1.4} className="ml-[7px]" />
      </div>
    </footer>
  );
}

export default function App() {
  return (
    <div className="relative flex h-[720px] w-[1280px] flex-col overflow-hidden bg-white font-['Open_Sans',sans-serif]">
      <Header />
      <TabBar />
      <main className="flex min-h-0 flex-1">
        <Sidebar />
        <div className="flex w-[1253px] flex-col">
          <section className="flex flex-col">
            <TitleBar tall text="Solana/Tether - SOLUSDT (CW) - 1 Minute $5.0 x 3 Close Point And Figure Chart - USD - No Layout --- Data from Cryptowatch" />
            <Nav x={24} y={79} w={1253} h={24} from={24} to={948} ox={0} oy={0} sx={1} sy={1}>
              <Line d="377,87 385,87 393,80 402,85 410,82 418,85 428,80" c="#aec6dc" w={0.6} />
            </Nav>
            <TopChart />
          </section>
          <div className="mt-[2px] flex gap-[5px]">
            <LeftPanel />
            <MidPanel />
            <RightPanel />
          </div>
        </div>
      </main>
      <Tooltip />
      <Taskbar />
    </div>
  );
}
